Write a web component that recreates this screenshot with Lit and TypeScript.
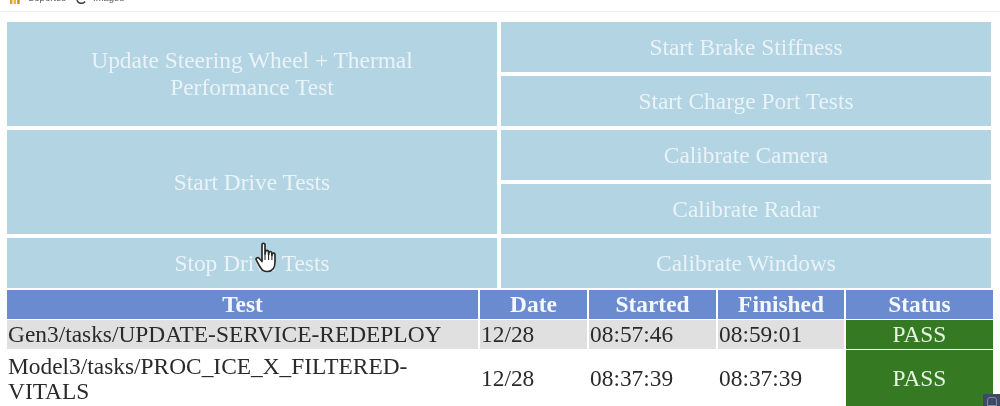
import { LitElement, html, css } from "lit";
import { customElement } from "lit/decorators.js";

@customElement("app-root")
export class AppRoot extends LitElement {
  static styles = css`
    :host {
      display: block;
      position: relative;
      width: 1000px;
      height: 406px;
      overflow: hidden;
      background: #fff;
      font-family: "Liberation Serif", "Times New Roman", serif;
      filter: blur(0.35px);
    }
    .bookmarks {
      height: 11px;
      border-bottom: 1px solid #eeeeee;
      overflow: hidden;
      display: flex;
      align-items: flex-end;
      padding-left: 10px;
      font: 9.5px "Liberation Sans", sans-serif;
      color: #555;
      line-height: 13px;
    }
    .bookmarks span { margin-bottom: 7px; white-space: nowrap; }
    .s1 { width: 34px; }
    .s2 { width: 27px; }
    .apps { width: 10px; height: 4px; margin-right: 8px; flex: none; align-self: flex-start; display: block; }
    .g { width: 10px; height: 4px; margin: 0 7px 0 14px; flex: none; align-self: flex-start; display: block; }
    .buttons {
      display: grid;
      grid-template-columns: 490px 490px;
      grid-template-rows: repeat(5, 50px);
      gap: 4px;
      margin: 10px 0 0 7px;
    }
    .btn {
      background: #b3d4e2;
      color: #eaf3f8;
      font-size: 23.4px;
      line-height: 27px;
      display: flex;
      align-items: center;
      justify-content: center;
      text-align: center;
      padding: 0 70px;
    }
    .left { grid-column: 1; }
    .right { grid-column: 2; }
    .first { grid-row: 1 / span 2; }
    .second { grid-row: 3 / span 2; }
    .third { grid-row: 5; }
    .table {
      display: grid;
      grid-template-columns: 471px 107px 127px 126px 147px;
      grid-template-rows: 28.5px 28.5px 56px;
      column-gap: 2px;
      row-gap: 1.5px;
      margin: 2px 0 0 7px;
      font-size: 23.4px;
      line-height: 25px;
      color: #2a2a2a;
    }
    .th {
      background: #6a8bcf;
      color: #f4f7fc;
      font-weight: bold;
      text-align: center;
      line-height: 28px;
    }
    .td { display: flex; align-items: center; padding-left: 1px; }
    .wrapcell { padding-top: 2px; }
    .shade { background: #e0e0e0; }
    .pass {
      background: #357a23;
      color: #e8f3e4;
      justify-content: center;
      padding: 0;
    }
    .hand { position: absolute; left: 255px; top: 242px; width: 22px; height: 31px; }
    .corner {
      position: absolute;
      left: 983px;
      top: 394px;
      width: 17px;
      height: 12px;
      background: #3d4a66;
      display: flex;
      justify-content: center;
      padding-top: 3px;
      box-sizing: border-box;
    }
    .corner i { display: block; width: 10px; height: 9px; border: 1px solid #7f8aa3; border-radius: 3px 3px 0 0; box-sizing: border-box; }
  `;

  render() {
    return html`
      <div class="bookmarks">
        <svg class="apps" viewBox="0 0 10 4"><rect x="0" width="2.4" height="4" fill="#d9a520"/><rect x="3.6" width="2.4" height="4" fill="#e3b93a"/><rect x="7.2" width="2.4" height="4" fill="#c98f1c"/></svg>
        <span class="s1">Soportes</span>
        <svg class="g" viewBox="0 0 10 4"><path d="M1 0 A4.5 4.5 0 0 0 9 1.5" fill="none" stroke="#444" stroke-width="1.6"/></svg>
        <span class="s2">Images</span>
      </div>
      <div class="buttons">
        <div class="btn left first">Update Steering Wheel + Thermal Performance Test</div>
        <div class="btn left second">Start Drive Tests</div>
        <div class="btn left third">Stop Drive Tests</div>
        <div class="btn right">Start Brake Stiffness</div>
        <div class="btn right">Start Charge Port Tests</div>
        <div class="btn right">Calibrate Camera</div>
        <div class="btn right">Calibrate Radar</div>
        <div class="btn right">Calibrate Windows</div>
      </div>
      <div class="table">
        <div class="th">Test</div><div class="th">Date</div><div class="th">Started</div><div class="th">Finished</div><div class="th">Status</div>
        <div class="td shade">Gen3/tasks/UPDATE-SERVICE-REDEPLOY</div><div class="td shade">12/28</div><div class="td shade">08:57:46</div><div class="td shade">08:59:01</div><div class="td pass">PASS</div>
        <div class="td wrapcell">Model3/tasks/PROC_ICE_X_FILTERED-VITALS</div><div class="td">12/28</div><div class="td">08:37:39</div><div class="td">08:37:39</div><div class="td pass">PASS</div>
      </div>
      <svg class="hand" viewBox="0 0 22 31">
        <path d="M7 2.5 C7 0.8 10 0.8 10 2.5 L10 12 L10.5 9.5 C11 8 13.3 8 13.5 9.8 L13.6 12.5 L14 10.5 C14.5 9 16.7 9.2 16.8 11 L16.9 13.5 L17.3 12 C17.8 10.6 20 10.8 20 12.6 L20 20 C20 26 17 29.5 12.5 29.5 C8 29.5 6.5 27.5 4.5 24 L1.3 18.2 C0.3 16.2 2.6 14.8 4 16.2 L7 19.5 Z" fill="#fff" stroke="#2b2b2b" stroke-width="1.7" stroke-linejoin="round"/>
        <path d="M10 12 V18 M13.6 12.5 V18 M16.9 13.5 V18" stroke="#2b2b2b" stroke-width="1.1" fill="none"/>
      </svg>
      <div class="corner"><i></i></div>
    `;
  }
}
